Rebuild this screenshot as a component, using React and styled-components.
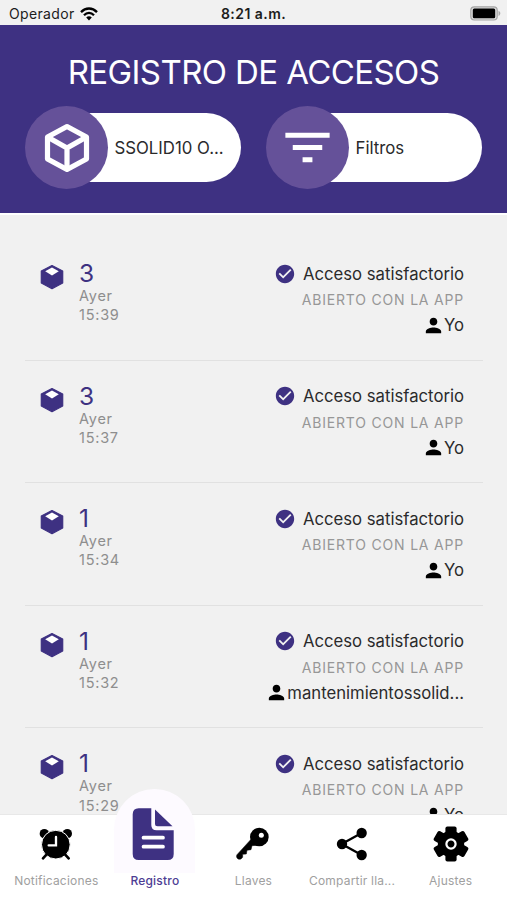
import React from "react";
import styled, { createGlobalStyle, ThemeProvider } from "styled-components";
import { MdCheckCircle, MdFilterList, MdPerson } from "react-icons/md";

const theme = {
  purple: "#3e3182",
  lightPurple: "#655199",
  background: "#f1f1f1",
  text: "#2a2a2b",
  gray: "#8e8e8e",
};

const GlobalStyle = createGlobalStyle`
  * {
    box-sizing: border-box;
  }

  body {
    margin: 0;
    font-family: Inter, "Liberation Sans", sans-serif;
    overflow: hidden;
  }

  svg {
    display: block;
    flex-shrink: 0;
  }
`;

const Screen = styled.div`
  display: flex;
  flex-direction: column;
  height: 900px;
  overflow: hidden;
  background-color: ${(props) => props.theme.background};
  color: ${(props) => props.theme.text};
`;

const StatusBar = styled.div`
  display: grid;
  grid-template-columns: 1fr auto 1fr;
  align-items: center;
  height: 25px;
  flex-shrink: 0;
  padding: 2px 6px 0 9px;
  font-size: 14px;
  line-height: 20px;
  color: #1c1c1c;
`;

const Carrier = styled.div`
  display: flex;
  align-items: center;
  gap: 5px;
  letter-spacing: 0.35px;
`;

const Clock = styled.div`
  margin-left: -3px;
  font-weight: 600;
  letter-spacing: 0.45px;
`;

const BatterySlot = styled.div`
  justify-self: end;
`;

const Header = styled.header`
  height: 190px;
  flex-shrink: 0;
  padding: 27px 25px 0;
  background-color: ${(props) => props.theme.purple};
  border-bottom: 2px solid #fff;
`;

const Title = styled.h1`
  margin: 0;
  color: #fff;
  font-size: 33px;
  font-weight: 400;
  line-height: 40px;
  letter-spacing: -0.6px;
  text-align: center;
  white-space: nowrap;
`;

const Pills = styled.div`
  display: flex;
  gap: 25px;
  margin-top: 14px;
`;

const Pill = styled.div`
  display: flex;
  align-items: center;
  width: 216px;
  height: 83px;
`;

const PillIcon = styled.div`
  display: flex;
  align-items: center;
  justify-content: center;
  width: 83px;
  height: 83px;
  flex-shrink: 0;
  z-index: 1;
  border-radius: 50%;
  color: #fff;
  background-color: ${(props) => props.theme.lightPurple};
`;

const PillLabel = styled.div`
  flex: 1;
  height: 69px;
  margin-left: -42px;
  padding-left: 48.5px;
  border-radius: 0 35px 35px 0;
  background-color: #fff;
  font-size: 16.8px;
  line-height: 70px;
  white-space: nowrap;
`;

const List = styled.div`
  flex: 1;
  min-height: 0;
  overflow: hidden;
  padding: 23px 24px 0 25px;
`;

const Row = styled.div`
  display: flex;
  justify-content: space-between;
  height: 122.6px;
  padding: 22px 19px 0 15px;
  border-bottom: 1px solid #e1e1e1;
`;

const RowLeft = styled.div`
  display: flex;
  gap: 15px;
`;

const CubeSlot = styled.div`
  padding-top: 4px;
`;

const Door = styled.div`
  color: ${(props) => props.theme.purple};
  font-size: 24.5px;
  font-weight: 400;
  line-height: 26px;
`;

const Moment = styled.div`
  color: ${(props) => props.theme.gray};
  font-size: 14.5px;
  line-height: 19.3px;
  letter-spacing: 0.75px;
`;

const RowRight = styled.div`
  display: flex;
  flex-direction: column;
  align-items: flex-end;
`;

const Status = styled.div`
  display: flex;
  align-items: center;
  gap: 6.5px;
  height: 27px;
  font-size: 16.7px;

  svg {
    color: ${(props) => props.theme.purple};
  }
`;

const Method = styled.div`
  color: #979797;
  font-size: 14px;
  line-height: 25px;
  letter-spacing: 0.8px;
`;

const Person = styled.div`
  display: flex;
  align-items: center;
  height: 26px;
  font-size: 16.7px;

  svg {
    margin-right: -1px;
    color: #000;
  }
`;

const TabBar = styled.nav`
  display: flex;
  height: 86px;
  flex-shrink: 0;
  padding: 0 7px;
  background-color: #fff;
  border-top: 1px solid #e8e8e8;
`;

const Tab = styled.div`
  display: flex;
  flex: 1;
  flex-direction: column;
  align-items: center;
  min-width: 0;
`;

const TabIcon = styled.div`
  display: flex;
  align-items: center;
  justify-content: center;
  width: 81px;
  height: ${(props) => (props.$active ? "84px" : "58px")};
  margin-top: ${(props) => (props.$active ? "-26px" : "0")};
  padding-top: ${(props) => (props.$active ? "6px" : "0")};
  padding-right: ${(props) => (props.$active ? "4px" : "0")};
  flex-shrink: 0;
  z-index: 1;
  border-radius: 41px 41px 0 0;
  background-color: ${(props) => (props.$active ? "#fdfaff" : "transparent")};
`;

const TabLabel = styled.div`
  color: ${(props) => (props.$active ? "#4d3d94" : "#a0a0a0")};
  font-size: 12px;
  font-weight: ${(props) => (props.$active ? 550 : 400)};
  line-height: 16px;
  letter-spacing: 0.2px;
  white-space: nowrap;
`;

function WifiIcon() {
  return (
    <svg width="18" height="14" viewBox="0 0 18 14" fill="none" stroke="#000" strokeWidth="2.3">
      <path d="M1 5.1C5.6 .3 12.4 .3 17 5.1" />
      <path d="M4 8.2c3-3 7-3 10 0" />
      <path d="M6.2 10.5c1.6-1.6 4-1.6 5.6 0L9 13.5z" fill="#000" stroke="none" />
    </svg>
  );
}

function BatteryIcon() {
  return (
    <svg width="31" height="15" viewBox="0 0 31 15">
      <rect x=".8" y=".8" width="26.4" height="13.2" rx="3.5" fill="#dcdcdc" stroke="#a5a5a5" strokeWidth="1.2" />
      <rect x="2.8" y="2.5" width="22.4" height="9.8" rx="1.5" fill="#000" />
      <path d="M28.5 4.8c2.4 1.2 2.4 4 0 5.2z" fill="#aaa" />
    </svg>
  );
}

function CubeOutline() {
  return (
    <svg width="46" height="50" viewBox="0 0 46 50" fill="none" stroke="#fff" strokeWidth="5.2" strokeLinejoin="round">
      <path d="M23 3.5 42.5 14v22L23 46.5 3.5 36V14z" />
      <path d="M3.5 14 23 25l19.5-11M23 25v21" />
    </svg>
  );
}

function CubeIcon() {
  return (
    <svg width="24" height="26" viewBox="0 0 24 26">
      <path
        d="M12 1.5 22.7 7v12L12 24.7 1.3 19V7z"
        fill="#3e3182"
        stroke="#3e3182"
        strokeWidth="1.2"
        strokeLinejoin="round"
      />
      <path d="M12 3.4 18.8 7.3 12 11.6 5.2 7.3z" fill="#fff" />
    </svg>
  );
}

function AlarmIcon() {
  return (
    <svg width="36" height="36" viewBox="26 32 108 108">
      <circle cx="45" cy="55" r="14" />
      <circle cx="114" cy="55" r="14" />
      <circle cx="79.5" cy="88" r="43" stroke="#fff" strokeWidth="3" />
      <path d="M52 117 41 129M107 117l11 12" stroke="#000" strokeWidth="8" strokeLinecap="round" />
      <path d="M80 65v25H58" fill="none" stroke="#fff" strokeWidth="7" strokeLinecap="round" />
    </svg>
  );
}

function DocumentIcon() {
  return (
    <svg width="42" height="54" viewBox="0 0 42 54" fill="#3e3182">
      <path d="M6.7 1.3H19.3V18q0 5.3 5.3 5.3H41.7V47q0 6-6 6H6.7q-6 0-6-6V7.3q0-6 6-6z" />
      <path d="M23 2.5 40.5 19.3h-15q-2.5 0-2.5-2.5z" />
      <path d="M11.5 30.7h19.5M11.5 39.7h19.5" stroke="#fff" strokeWidth="3.7" strokeLinecap="round" />
    </svg>
  );
}

function KeyIcon() {
  return (
    <svg width="36" height="36" viewBox="31 33 108 108">
      <path
        d="M78 74 37 119q-3 5 0 10 4 6 12 3l5-5v-9l11-1 2-11 12-2 3-12 14-1z"
        stroke="#000"
        strokeWidth="1.5"
        strokeLinejoin="round"
      />
      <circle cx="104" cy="66" r="28" />
      <circle cx="110" cy="61" r="7.5" fill="#fff" />
    </svg>
  );
}

function ShareIcon() {
  return (
    <svg width="36" height="36" viewBox="255 257 108 108">
      <path d="m338 278-60 33 60 33" fill="none" stroke="#000" strokeWidth="7" />
      <circle cx="279" cy="311" r="15.5" />
      <circle cx="338" cy="278" r="15.5" />
      <circle cx="338" cy="344" r="15.5" />
    </svg>
  );
}

function GearIcon() {
  return (
    <svg width="36" height="36" viewBox="-18 -18 36 36">
      <circle r="13.2" />
      {[0, 60, 120].map((angle) => (
        <rect key={angle} x="-5.6" y="-17.6" width="11.2" height="35.2" rx="2" transform={`rotate(${angle})`} />
      ))}
      <circle r="4.6" fill="none" stroke="#fff" strokeWidth="2.2" />
    </svg>
  );
}

const entries = [
  { door: "3", time: "15:39", person: "Yo" },
  { door: "3", time: "15:37", person: "Yo" },
  { door: "1", time: "15:34", person: "Yo" },
  { door: "1", time: "15:32", person: "mantenimientossolid..." },
  { door: "1", time: "15:29", person: "Yo" },
];

const tabs = [
  { label: "Notificaciones", icon: <AlarmIcon /> },
  { label: "Registro", icon: <DocumentIcon />, active: true },
  { label: "Llaves", icon: <KeyIcon /> },
  { label: "Compartir lla...", icon: <ShareIcon /> },
  { label: "Ajustes", icon: <GearIcon /> },
];

function App() {
  return (
    <ThemeProvider theme={theme}>
      <GlobalStyle />
      <Screen>
        <StatusBar>
          <Carrier>
            Operador
            <WifiIcon />
          </Carrier>
          <Clock>8:21 a.m.</Clock>
          <BatterySlot>
            <BatteryIcon />
          </BatterySlot>
        </StatusBar>
        <Header>
          <Title>REGISTRO DE ACCESOS</Title>
          <Pills>
            <Pill>
              <PillIcon>
                <CubeOutline />
              </PillIcon>
              <PillLabel>SSOLID10 O...</PillLabel>
            </Pill>
            <Pill>
              <PillIcon>
                <MdFilterList size={59} />
              </PillIcon>
              <PillLabel>Filtros</PillLabel>
            </Pill>
          </Pills>
        </Header>
        <List>
          {entries.map((entry) => (
            <Row key={entry.time}>
              <RowLeft>
                <CubeSlot>
                  <CubeIcon />
                </CubeSlot>
                <div>
                  <Door>{entry.door}</Door>
                  <Moment>Ayer</Moment>
                  <Moment>{entry.time}</Moment>
                </div>
              </RowLeft>
              <RowRight>
                <Status>
                  <MdCheckCircle size={22} />
                  Acceso satisfactorio
                </Status>
                <Method>ABIERTO CON LA APP</Method>
                <Person>
                  <MdPerson size={23} />
                  {entry.person}
                </Person>
              </RowRight>
            </Row>
          ))}
        </List>
        <TabBar>
          {tabs.map((tab) => (
            <Tab key={tab.label}>
              <TabIcon $active={tab.active}>{tab.icon}</TabIcon>
              <TabLabel $active={tab.active}>{tab.label}</TabLabel>
            </Tab>
          ))}
        </TabBar>
      </Screen>
    </ThemeProvider>
  );
}

export default App;
